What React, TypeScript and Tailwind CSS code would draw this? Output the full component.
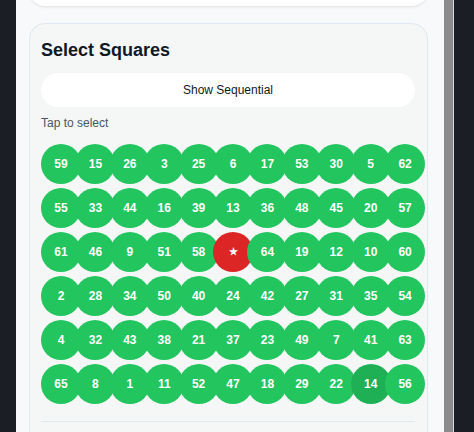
import { Fragment } from 'react'

const ROWS: (number | 'star')[][] = [
  [59, 15, 26, 3, 25, 6, 17, 53, 30, 5, 62],
  [55, 33, 44, 16, 39, 13, 36, 48, 45, 20, 57],
  [61, 46, 9, 51, 58, 'star', 64, 19, 12, 10, 60],
  [2, 28, 34, 50, 40, 24, 42, 27, 31, 35, 54],
  [4, 32, 43, 38, 21, 37, 23, 49, 7, 41, 63],
  [65, 8, 1, 11, 52, 47, 18, 29, 22, 14, 56],
]

const HIGHLIGHT = 14

function Square({ value, first }: { value: number | 'star'; first: boolean }) {
  const star = value === 'star'
  const dark = value === HIGHLIGHT
  const color = star ? 'bg-[#dc2626]' : dark ? 'bg-[#1fb055]' : 'bg-[#22c55e]'
  return (
    <button
      type="button"
      className={`flex h-10 w-10 shrink-0 items-center justify-center rounded-full text-[12px] font-bold leading-none text-white ${color} ${first ? '' : '-ml-[5.6px]'}`}
    >
      {star ? <span className="text-[10px]">★</span> : value}
    </button>
  )
}

export default function App() {
  return (
    <div className="flex h-[432px] w-[474px] overflow-hidden bg-[#1b1e25] font-['Liberation_Sans',Arial,sans-serif]">
      <div className="w-4 shrink-0" />
      <main className="w-[428px] shrink-0 overflow-hidden bg-[#f8f9fa] pl-[13px] pr-[16px]">
        <div className="-mt-[34px] h-10 rounded-2xl bg-white shadow-[0_1px_3px_rgba(15,23,42,0.10)]" />

        <section className="mt-[17px] rounded-2xl border border-[#e1e8ef] bg-[#f5f7f7] py-3 pl-[11px] pr-3">
          <h2 className="text-lg leading-7 font-bold text-[#111827]">Select Squares</h2>
          <button type="button" className="mt-[9px] flex h-[34px] w-full items-center justify-center rounded-full bg-white text-xs text-[#111827]">
            Show Sequential
          </button>
          <p className="mt-2 text-xs leading-4 text-[#4b5563]">Tap to select</p>

          <div className="mt-[13px] flex flex-col gap-1">
            {ROWS.map((row, r) => (
              <div key={r} className="flex">
                {row.map((v, i) => (
                  <Fragment key={`${r}-${i}`}>
                    <Square value={v} first={i === 0} />
                  </Fragment>
                ))}
              </div>
            ))}
          </div>

          <div className="mt-[17px] h-5 border-t border-[#e1e8ef]" />
        </section>
      </main>
      <div className="w-[9px] shrink-0 bg-[#8b8b8b]" />
      <div className="w-px shrink-0 bg-[#d6d9de]" />
    </div>
  )
}
